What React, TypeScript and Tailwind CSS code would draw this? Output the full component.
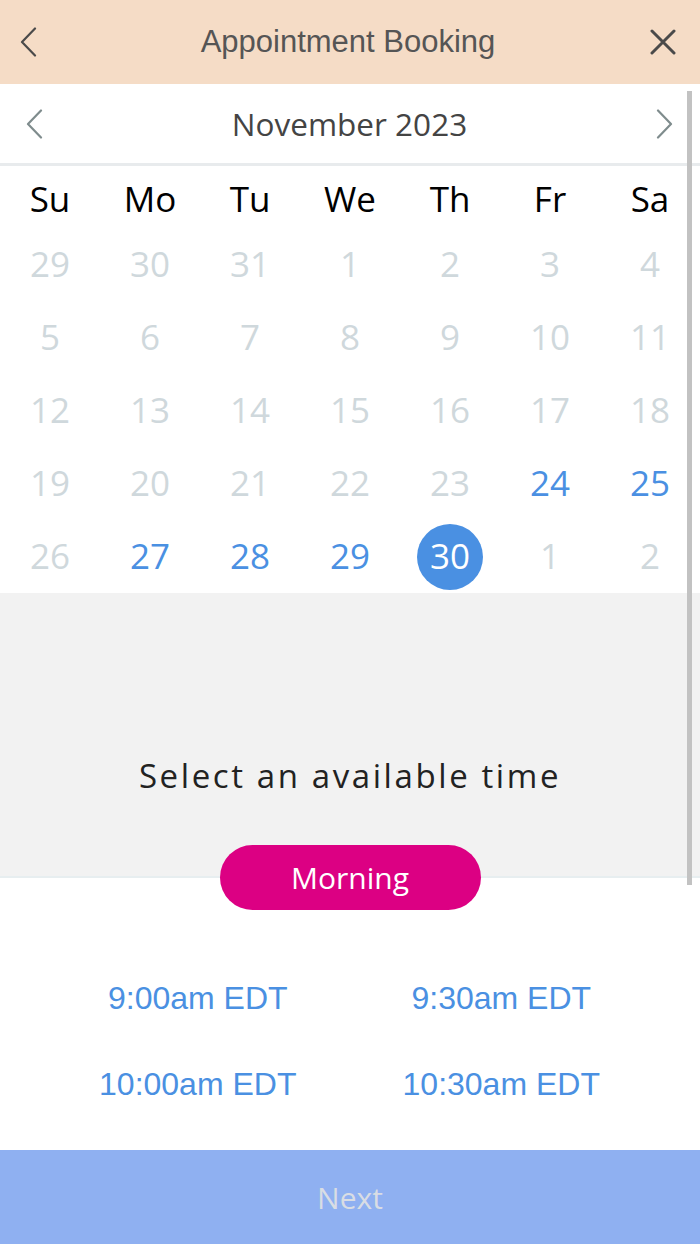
const WEEKDAYS = ['Su', 'Mo', 'Tu', 'We', 'Th', 'Fr', 'Sa'];

type Day = { label: number; available?: boolean; selected?: boolean };

const WEEKS: Day[][] = [
  [29, 30, 31, 1, 2, 3, 4].map((n) => ({ label: n })),
  [5, 6, 7, 8, 9, 10, 11].map((n) => ({ label: n })),
  [12, 13, 14, 15, 16, 17, 18].map((n) => ({ label: n })),
  [
    { label: 19 },
    { label: 20 },
    { label: 21 },
    { label: 22 },
    { label: 23 },
    { label: 24, available: true },
    { label: 25, available: true },
  ],
  [
    { label: 26 },
    { label: 27, available: true },
    { label: 28, available: true },
    { label: 29, available: true },
    { label: 30, available: true, selected: true },
    { label: 1 },
    { label: 2 },
  ],
];

const SLOTS = ['9:00am EDT', '9:30am EDT', '10:00am EDT', '10:30am EDT'];

const openSans = "font-['Open_Sans',sans-serif]";

// thin iOS-style chevron, drawn to match the reference strokes
function Chevron({ dir, className }: { dir: 'left' | 'right'; className?: string }) {
  return (
    <svg width="17" height="30" viewBox="0 0 17 30" fill="none" className={className}>
      <polyline
        points={dir === 'left' ? '15,1.5 2,15 15,28.5' : '2,1.5 15,15 2,28.5'}
        stroke="currentColor"
        strokeWidth="2.2"
        strokeLinecap="round"
        strokeLinejoin="round"
      />
    </svg>
  );
}

export default function App() {
  return (
    <div className="relative flex h-[1244px] w-[700px] flex-col overflow-hidden bg-white">
      {/* top bar: equal-width icon slots keep the title centred */}
      <header className="flex h-[84px] shrink-0 items-center justify-between bg-[#f5dcc6] pl-[20px] pr-[24px] text-[#4a4a4a]">
        <div className="flex w-[30px] justify-start">
          <Chevron dir="left" />
        </div>
        <h1 className="font-['Liberation_Sans',sans-serif] text-[31px] text-[#555]">Appointment Booking</h1>
        <div className="flex w-[30px] justify-end">
          <svg width="26" height="26" viewBox="0 0 26 26" fill="none">
            <path d="M2 2 L24 24 M24 2 L2 24" stroke="currentColor" strokeWidth="3" strokeLinecap="round" />
          </svg>
        </div>
      </header>

      {/* month switcher */}
      <div className="flex h-[82px] shrink-0 items-center justify-between border-b-[3px] border-[#e8ebed] pl-[26px] pr-[27px] text-[#7f8c8d]">
        <Chevron dir="left" />
        <span className={`${openSans} text-[31.5px] text-[#444]`}>November 2023</span>
        <Chevron dir="right" />
      </div>

      {/* calendar grid */}
      <div className={`${openSans} grid grid-cols-7`}>
        {WEEKDAYS.map((d) => (
          <div key={d} className="flex h-[62px] items-center justify-center pt-[4px] text-[35px] text-black">
            {d}
          </div>
        ))}
        {WEEKS.flat().map((day, i) => (
          <div key={i} className="flex h-[73px] items-center justify-center">
            {day.selected ? (
              <span className="flex h-[66px] w-[66px] items-center justify-center rounded-full bg-[#4a90e2] text-[35px] text-white">
                {day.label}
              </span>
            ) : (
              <span className={`text-[35px] ${day.available ? 'text-[#4a90e2]' : 'text-[#cfd8dc]'}`}>{day.label}</span>
            )}
          </div>
        ))}
      </div>

      {/* time section */}
      <div className="flex h-[285px] shrink-0 flex-col items-center border-b-[2px] border-[#e7eef0] bg-[#f2f2f2] pt-[158px]">
        <p className={`${openSans} text-[33px] tracking-[2.6px] text-[#222]`}>Select an available time</p>
      </div>
      <div className="-mt-[33px] flex justify-center">
        <button className={`${openSans} flex h-[65px] w-[261px] items-center justify-center rounded-full bg-[#dc0083] text-[30px] text-white`}>
          Morning
        </button>
      </div>

      <div className="mt-[68px] grid grid-cols-2 gap-y-[46px] pl-[46px] pr-[47px]">
        {SLOTS.map((s) => (
          <div key={s} className="flex h-[40px] items-center justify-center font-['Liberation_Sans',sans-serif] text-[32px] text-[#4a90e2]">
            {s}
          </div>
        ))}
      </div>

      <div className="flex-1" />

      <button className={`${openSans} flex h-[94px] w-full shrink-0 items-center justify-center bg-[#8fb0f1] text-[30px] text-[#d9dde4]`}>
        Next
      </button>

      {/* scroll indicator */}
      <div className="absolute right-[8px] top-[91px] h-[794px] w-[5px] bg-[#c2c2c2]" />
    </div>
  );
}
